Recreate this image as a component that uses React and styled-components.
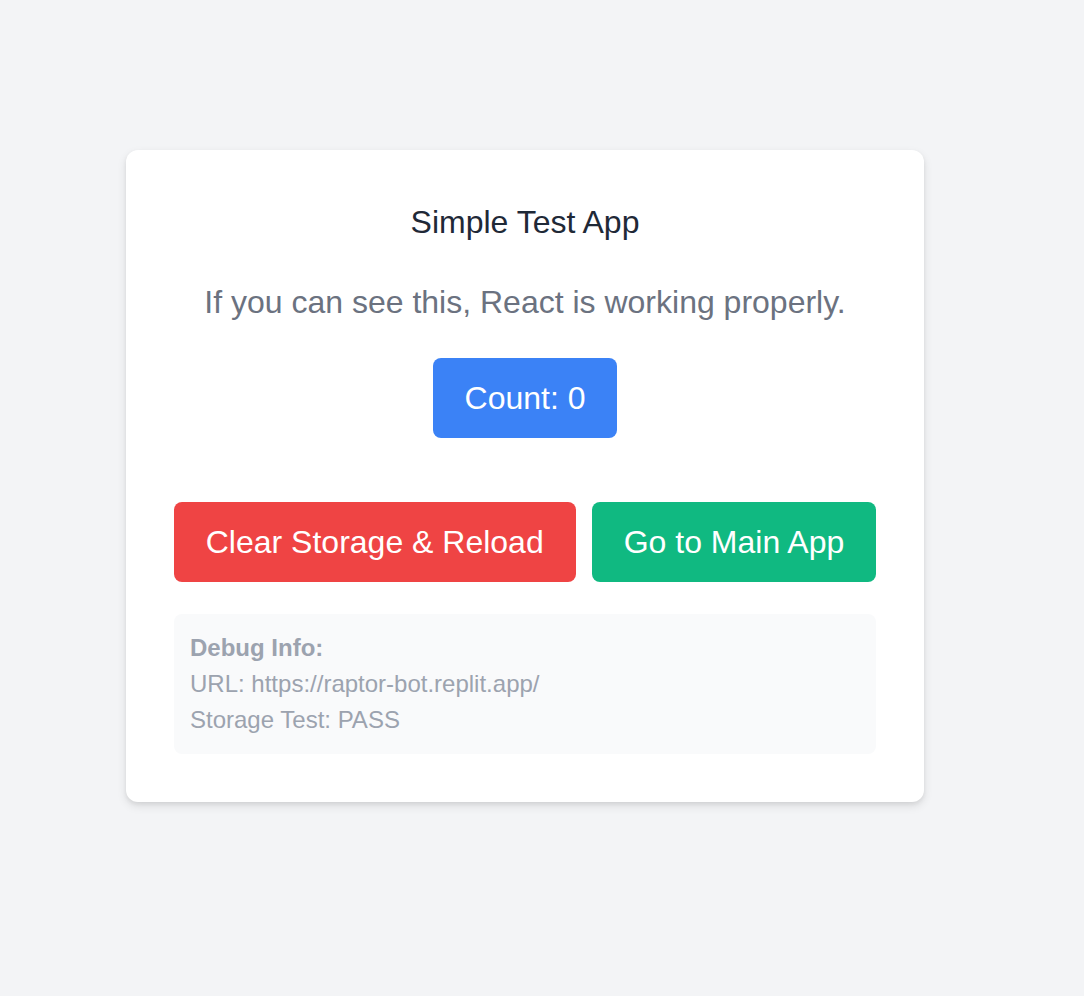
import React, { useState } from "react";
import styled, { createGlobalStyle } from "styled-components";

const GlobalStyle = createGlobalStyle`
  html, body {
    margin: 0;
    padding: 0;
    background: #f3f4f6;
  }
  body {
    font-family: "Liberation Sans", Arial, Helvetica, sans-serif;
    line-height: 1.5;
  }
`;

const Page = styled.div`
  min-height: 996px;
  box-sizing: border-box;
  padding: 150px 0 0 126px;
`;

const Card = styled.div`
  width: 798px;
  box-sizing: border-box;
  background: #ffffff;
  border-radius: 12px;
  box-shadow: 0 4px 10px rgba(0, 0, 0, 0.1), 0 2px 4px rgba(0, 0, 0, 0.06);
  padding: 48px;
  display: flex;
  flex-direction: column;
  align-items: center;
  text-align: center;
`;

const Title = styled.h1`
  margin: 0;
  font-size: 32px;
  font-weight: 400;
  line-height: 48px;
  color: #1f2937;
`;

const Subtitle = styled.p`
  margin: 32px 0 0;
  font-size: 32px;
  line-height: 48px;
  color: #6b7280;
`;

const Button = styled.button`
  font-family: inherit;
  font-size: 32px;
  line-height: 48px;
  color: #ffffff;
  background: ${(p) => p.$bg};
  border: none;
  border-radius: 8px;
  padding: 16px 32px;
  cursor: pointer;
  white-space: nowrap;
`;

const CountButton = styled(Button)`
  margin-top: 32px;
`;

const ButtonRow = styled.div`
  margin-top: 64px;
  display: flex;
  gap: 16px;
  justify-content: center;
  width: 100%;
`;

const Debug = styled.div`
  margin-top: 32px;
  width: 100%;
  box-sizing: border-box;
  background: #f9fafb;
  border-radius: 8px;
  padding: 16px;
  text-align: left;
  font-size: 24px;
  line-height: 36px;
  color: #9ca3af;
`;

const DebugLine = styled.div`
  font-weight: ${(p) => (p.$bold ? 700 : 400)};
`;

export default function App() {
  const [count, setCount] = useState(0);
  return (
    <>
      <GlobalStyle />
      <Page>
        <Card>
          <Title>Simple Test App</Title>
          <Subtitle>If you can see this, React is working properly.</Subtitle>
          <CountButton $bg="#3b82f6" onClick={() => setCount((c) => c + 1)}>
            Count: {count}
          </CountButton>
          <ButtonRow>
            <Button $bg="#ef4444">Clear Storage &amp; Reload</Button>
            <Button $bg="#10b981">Go to Main App</Button>
          </ButtonRow>
          <Debug>
            <DebugLine $bold>Debug Info:</DebugLine>
            <DebugLine>URL: https://raptor-bot.replit.app/</DebugLine>
            <DebugLine>Storage Test: PASS</DebugLine>
          </Debug>
        </Card>
      </Page>
    </>
  );
}
